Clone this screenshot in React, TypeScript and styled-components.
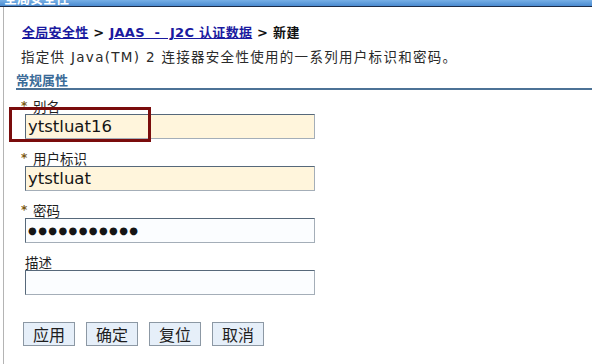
import React from "react";
import styled, { createGlobalStyle } from "styled-components";

const Global = createGlobalStyle`
  html, body { margin: 0; padding: 0; background: #ffffff; }
  body { font-family: "DejaVu Sans", "Noto Sans CJK SC", sans-serif; }
  * { box-sizing: border-box; }
`;

const Page = styled.div`
  width: 592px;
  height: 364px;
  overflow: hidden;
  display: flex;
  flex-direction: column;
  background: #fff;
`;

const TitleBar = styled.div`
  height: 7px;
  overflow: hidden;
  background: linear-gradient(#78b0e6, #4a8ad0);
  border-bottom: 1px solid #1c2c48;
  padding-left: 4px;
`;

const TitleText = styled.div`
  margin-top: -9px;
  font-size: 13px;
  line-height: 16px;
  font-weight: bold;
  color: #ffffff;
`;

const Frame = styled.div`
  flex: 1;
  margin-left: 3px;
  border-left: 1px solid #b4b4b4;
  padding: 18px 0 0 12px;
  display: flex;
  flex-direction: column;
`;

const Crumbs = styled.div`
  padding-left: 6px;
  font-size: 13px;
  line-height: 16px;
  font-weight: bold;
  color: #111;
  white-space: nowrap;
  letter-spacing: 0.3px;
`;

const CrumbLink = styled.a`
  color: #1a1aa0;
  text-decoration: underline;
`;

const Description = styled.div`
  margin-top: 8px;
  padding-left: 5px;
  font-size: 13.5px;
  line-height: 16px;
  color: #2a2a2a;
  white-space: nowrap;
  letter-spacing: 1.3px;
`;

const SectionHeader = styled.div`
  margin-top: 8px;
  font-size: 13px;
  line-height: 15px;
  font-weight: bold;
  color: #3c6c98;
  border-bottom: 2px solid #4c7296;
`;

const Form = styled.div`
  display: flex;
  flex-direction: column;
  gap: 11px;
  margin-top: 8px;
  padding-left: 5px;
`;

const Field = styled.div`
  position: relative;
  display: flex;
  flex-direction: column;
`;

const Label = styled.div`
  display: flex;
  align-items: center;
  height: 16px;
  font-size: 13.5px;
  color: #1e1e1e;
  white-space: nowrap;
`;

const Star = styled.span`
  width: 12px;
  font-size: 12px;
  font-weight: bold;
  color: #7a5a14;
`;

const Indent = styled.span<{ $w: number }>`
  display: inline-block;
  width: ${(p) => p.$w}px;
`;

const Input = styled.input<{ $required?: boolean; $dots?: boolean }>`
  margin: 0 0 0 4px;
  width: 290px;
  height: 25px;
  padding: 0 2px;
  border: 1px solid;
  border-color: #56687a #a4aeb8 #a4aeb8 #56687a;
  background: ${(p) => (p.$required ? "#fff5dc" : "#fbfdff")};
  font-family: "DejaVu Sans", sans-serif;
  font-size: ${(p) => (p.$dots ? "10px" : "16.5px")};
  letter-spacing: ${(p) => (p.$dots ? "1.4px" : "0")};
  color: #151515;
  outline: none;
`;

const Highlight = styled.div`
  position: absolute;
  left: -12px;
  top: 9px;
  width: 142px;
  height: 35px;
  border: 3px solid #7a0c0c;
  pointer-events: none;
`;

const Buttons = styled.div`
  display: flex;
  gap: 11px;
  margin-top: 27px;
  padding-left: 7px;
`;

const Button = styled.button`
  height: 24px;
  padding: 0 9px;
  border: 1px solid #8c98a4;
  background: #e6eff9;
  font-family: "Noto Sans CJK SC", sans-serif;
  font-size: 16px;
  line-height: 22px;
  color: #1e1e1e;
`;

export default function App() {
  return (
    <>
      <Global />
      <Page>
        <TitleBar>
          <TitleText>全局安全性</TitleText>
        </TitleBar>
        <Frame>
          <Crumbs>
            <CrumbLink>全局安全性</CrumbLink> &gt;{" "}
            <CrumbLink>JAAS &nbsp;-&nbsp; J2C 认证数据</CrumbLink> &gt; 新建
          </Crumbs>
          <Description>指定供 Java(TM) 2 连接器安全性使用的一系列用户标识和密码。</Description>
          <SectionHeader>常规属性</SectionHeader>
          <Form>
            <Field>
              <Label>
                <Star>*</Star>别名
              </Label>
              <Input $required readOnly value="ytstluat16" />
              <Highlight />
            </Field>
            <Field>
              <Label>
                <Star>*</Star>用户标识
              </Label>
              <Input $required readOnly value="ytstluat" />
            </Field>
            <Field>
              <Label>
                <Star>*</Star>密码
              </Label>
              <Input $dots readOnly value="●●●●●●●●●●●" />
            </Field>
            <Field>
              <Label>
                <Indent $w={4} />描述
              </Label>
              <Input readOnly value="" />
            </Field>
          </Form>
          <Buttons>
            <Button>应用</Button>
            <Button>确定</Button>
            <Button>复位</Button>
            <Button>取消</Button>
          </Buttons>
        </Frame>
      </Page>
    </>
  );
}
